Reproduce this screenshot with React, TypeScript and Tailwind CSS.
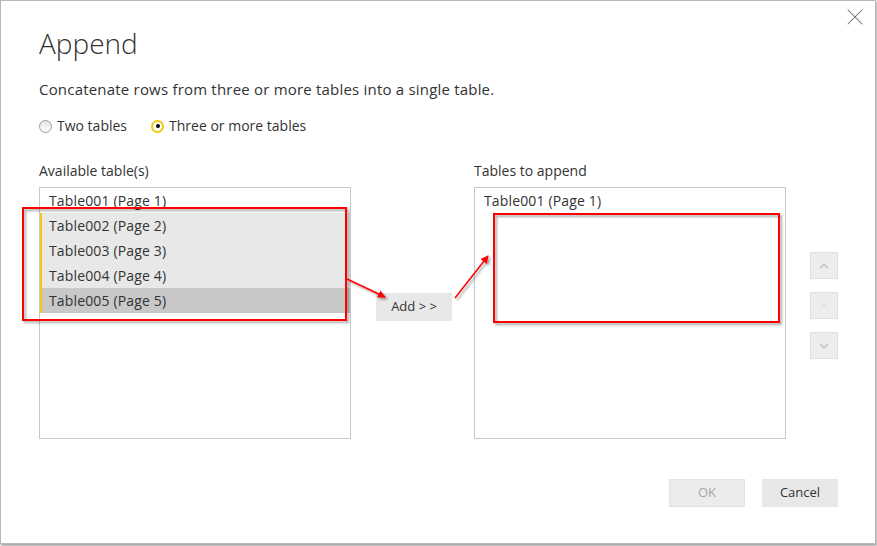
import { X, ChevronUp, ChevronDown } from 'lucide-react';

const available = [
  { label: 'Table001 (Page 1)', state: 'none' },
  { label: 'Table002 (Page 2)', state: 'hl' },
  { label: 'Table003 (Page 3)', state: 'hl' },
  { label: 'Table004 (Page 4)', state: 'hl' },
  { label: 'Table005 (Page 5)', state: 'sel' },
];

function Radio({ checked, label }: { checked?: boolean; label: string }) {
  return (
    <label className="flex items-center gap-[5px]">
      {checked ? (
        <span className="w-[13px] h-[13px] rounded-full border-[2px] border-[#f2c811] bg-white flex items-center justify-center">
          <span className="w-[4px] h-[4px] rounded-full bg-black" />
        </span>
      ) : (
        <span className="w-[13px] h-[13px] rounded-full border border-[#9a9a9a] bg-gradient-to-b from-[#e6e6e6] to-[#ffffff]" />
      )}
      <span>{label}</span>
    </label>
  );
}

function SideButton({ children }: { children: React.ReactNode }) {
  return (
    <button className="w-[28px] h-[27px] bg-[#ededed] border border-[#e0e0e0] flex items-center justify-center text-[#c4c4c4]">
      {children}
    </button>
  );
}

function rowClass(state: string) {
  if (state === 'sel') return 'h-[25px] flex items-center pl-[7px] text-[14px] tracking-[0.15px] bg-[#c8c8c8] border-l-[2px] border-l-[#f2c811]';
  if (state === 'hl') return 'h-[25px] flex items-center pl-[7px] text-[14px] tracking-[0.15px] bg-[#e8e8e8] border-l-[2px] border-l-[#f2c811]';
  return 'h-[25px] flex items-center pl-[9px] text-[14px] tracking-[0.15px]';
}

export default function App() {
  return (
    <div className="w-[877px] h-[546px] bg-white" style={{ fontFamily: '"Open Sans", "Noto Sans", sans-serif' }}>
      <div className="relative w-[876px] h-[544px] border border-[#b9b9b9] shadow-[1px_2px_2px_rgba(0,0,0,0.35)] text-[#333333]">
        <div className="flex justify-end pt-[2px] pr-[6px]">
          <button className="text-[#6b6b6b]">
            <X className="w-[28px] h-[28px]" strokeWidth={0.9} />
          </button>
        </div>

        <div className="pl-[38px] pr-[37px]">
          <h1 className="text-[28px] font-light leading-[34px] mt-[-5px] text-[#333]">Append</h1>
          <p className="text-[15px] tracking-[0.2px] mt-[19px] leading-[20px]">
            Concatenate rows from three or more tables into a single table.
          </p>
          <div className="flex items-center gap-[24px] mt-[17px] text-[14px] leading-[20px]">
            <Radio label="Two tables" />
            <Radio checked label="Three or more tables" />
          </div>

          <div className="flex mt-[25px]">
            <div className="w-[312px]">
              <div className="text-[14px] leading-[20px]">Available table(s)</div>
              <div className="mt-[6px] h-[252px] border border-[#c8c8c8]">
                {available.map((t) => (
                  <div key={t.label} className={rowClass(t.state)}>
                    {t.label}
                  </div>
                ))}
              </div>
            </div>

            <div className="w-[123px] flex flex-col">
              <button className="mt-[132px] ml-[25px] w-[76px] h-[28px] bg-[#e8e8e8] text-[13px] text-[#333]">
                Add &gt; &gt;
              </button>
            </div>

            <div className="w-[312px]">
              <div className="text-[14px] leading-[20px]">Tables to append</div>
              <div className="mt-[6px] h-[252px] border border-[#c8c8c8]">
                <div className="h-[25px] flex items-center pl-[9px] text-[14px] tracking-[0.15px]">Table001 (Page 1)</div>
              </div>
            </div>

            <div className="ml-[24px] flex flex-col gap-[13px] mt-[91px]">
              <SideButton>
                <ChevronUp className="w-[14px] h-[14px]" strokeWidth={3} />
              </SideButton>
              <SideButton>
                <X className="w-[12px] h-[12px] text-[#e2e2e2]" strokeWidth={2.5} />
              </SideButton>
              <SideButton>
                <ChevronDown className="w-[14px] h-[14px]" strokeWidth={3} />
              </SideButton>
            </div>
          </div>

          <div className="flex justify-end gap-[17px] mt-[40px]">
            <button className="w-[76px] h-[28px] bg-[#ececec] border border-[#e2e2e2] text-[13px] text-[#a6a6a6]">OK</button>
            <button className="w-[76px] h-[28px] bg-[#e8e8e8] text-[13px] text-[#333]">Cancel</button>
          </div>
        </div>

        {/* red annotations drawn over the dialog */}
        <svg className="absolute left-0 top-0 pointer-events-none" width="876" height="544">
          <defs>
            <filter id="sh" x="-5%" y="-5%" width="115%" height="120%">
              <feDropShadow dx="2" dy="2" stdDeviation="1.2" floodColor="#000" floodOpacity="0.35" />
            </filter>
            <marker id="ah" markerWidth="8" markerHeight="8" refX="7" refY="4" orient="auto" markerUnits="userSpaceOnUse">
              <path d="M0,0 L8,4 L0,8 z" fill="#ff0000" />
            </marker>
          </defs>
          <g filter="url(#sh)">
            <rect x="22" y="207" width="323" height="112" fill="none" stroke="#ff0000" strokeWidth="2" />
            <rect x="493" y="213" width="285" height="108" fill="none" stroke="#ff0000" strokeWidth="2" />
            <line x1="346" y1="278" x2="384" y2="296" stroke="#ff0000" strokeWidth="1.5" markerEnd="url(#ah)" />
            <line x1="454" y1="297" x2="487" y2="255" stroke="#ff0000" strokeWidth="1.5" markerEnd="url(#ah)" />
          </g>
        </svg>
      </div>
    </div>
  );
}
